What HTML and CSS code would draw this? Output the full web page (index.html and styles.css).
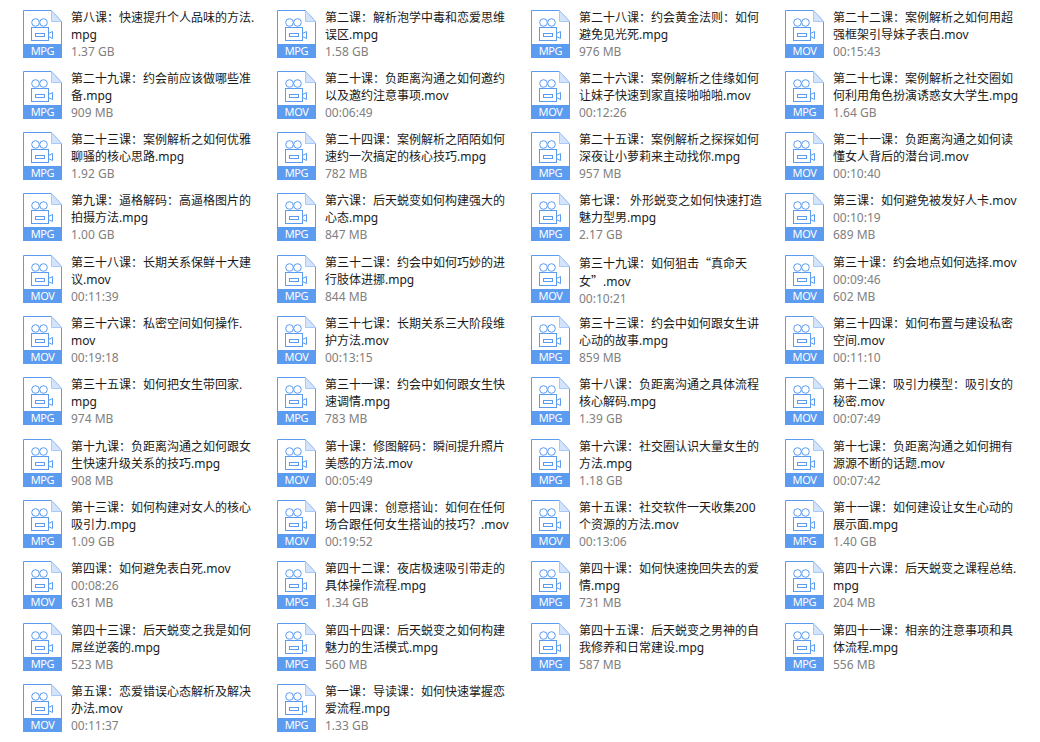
FILE: index.html
```html
<!DOCTYPE html>
<html lang="zh-CN">
<head>
    <meta charset="UTF-8">
    <meta name="viewport" content="width=device-width, initial-scale=1.0">
    <title>课程文件</title>
    <link rel="stylesheet" href="styles.css">
</head>
<body>
    <!-- 图标只画一次，后面都用 use 引用 -->
    <svg class="icon-defs" width="0" height="0">
        <symbol id="file" viewBox="0 0 39 48">
            <path d="M.5.5H28.5L38.5 11.5V47.5H.5Z" fill="#fff" stroke="#5b9bf0"/>
            <path d="M28.5.5V11.5H38.5Z" fill="#d3e4fb" stroke="#a9c9f6"/>
            <rect y="34" width="39" height="14" fill="#5b9bf0"/>
            <g fill="none" stroke="#5b9bf0">
                <circle cx="12.5" cy="12.5" r="3.8"/>
                <circle cx="20.5" cy="12.5" r="3.8"/>
                <rect x="8.5" y="17.5" width="17" height="13"/>
                <rect x="12.5" y="23.5" width="9" height="3"/>
                <path d="M25.5 23.5L29.5 21.5V28.5L25.5 26.5"/>
            </g>
        </symbol>
    </svg>

    <div class="file-grid">
        <div class="file"><div class="icon"><svg><use href="#file"/></svg><span>MPG</span></div><div class="info"><p class="name">第八课：快速提升个人品味的方法.<br>mpg</p><p class="meta">1.37 GB</p></div></div>
        <div class="file"><div class="icon"><svg><use href="#file"/></svg><span>MPG</span></div><div class="info"><p class="name">第二课：解析泡学中毒和恋爱思维<br>误区.mpg</p><p class="meta">1.58 GB</p></div></div>
        <div class="file"><div class="icon"><svg><use href="#file"/></svg><span>MPG</span></div><div class="info"><p class="name">第二十八课：约会黄金法则：如何<br>避免见光死.mpg</p><p class="meta">976 MB</p></div></div>
        <div class="file"><div class="icon"><svg><use href="#file"/></svg><span>MOV</span></div><div class="info"><p class="name">第二十二课：案例解析之如何用超<br>强框架引导妹子表白.mov</p><p class="meta">00:15:43</p></div></div>

        <div class="file"><div class="icon"><svg><use href="#file"/></svg><span>MPG</span></div><div class="info"><p class="name">第二十九课：约会前应该做哪些准<br>备.mpg</p><p class="meta">909 MB</p></div></div>
        <div class="file"><div class="icon"><svg><use href="#file"/></svg><span>MOV</span></div><div class="info"><p class="name">第二十课：负距离沟通之如何邀约<br>以及邀约注意事项.mov</p><p class="meta">00:06:49</p></div></div>
        <div class="file"><div class="icon"><svg><use href="#file"/></svg><span>MOV</span></div><div class="info"><p class="name">第二十六课：案例解析之佳缘如何<br>让妹子快速到家直接啪啪啪.mov</p><p class="meta">00:12:26</p></div></div>
        <div class="file"><div class="icon"><svg><use href="#file"/></svg><span>MPG</span></div><div class="info"><p class="name">第二十七课：案例解析之社交圈如<br>何利用角色扮演诱惑女大学生.mpg</p><p class="meta">1.64 GB</p></div></div>

        <div class="file"><div class="icon"><svg><use href="#file"/></svg><span>MPG</span></div><div class="info"><p class="name">第二十三课：案例解析之如何优雅<br>聊骚的核心思路.mpg</p><p class="meta">1.92 GB</p></div></div>
        <div class="file"><div class="icon"><svg><use href="#file"/></svg><span>MPG</span></div><div class="info"><p class="name">第二十四课：案例解析之陌陌如何<br>速约一次搞定的核心技巧.mpg</p><p class="meta">782 MB</p></div></div>
        <div class="file"><div class="icon"><svg><use href="#file"/></svg><span>MPG</span></div><div class="info"><p class="name">第二十五课：案例解析之探探如何<br>深夜让小萝莉来主动找你.mpg</p><p class="meta">957 MB</p></div></div>
        <div class="file"><div class="icon"><svg><use href="#file"/></svg><span>MOV</span></div><div class="info"><p class="name">第二十一课：负距离沟通之如何读<br>懂女人背后的潜台词.mov</p><p class="meta">00:10:40</p></div></div>

        <div class="file"><div class="icon"><svg><use href="#file"/></svg><span>MPG</span></div><div class="info"><p class="name">第九课：逼格解码：高逼格图片的<br>拍摄方法.mpg</p><p class="meta">1.00 GB</p></div></div>
        <div class="file"><div class="icon"><svg><use href="#file"/></svg><span>MPG</span></div><div class="info"><p class="name">第六课：后天蜕变如何构建强大的<br>心态.mpg</p><p class="meta">847 MB</p></div></div>
        <div class="file"><div class="icon"><svg><use href="#file"/></svg><span>MPG</span></div><div class="info"><p class="name">第七课： 外形蜕变之如何快速打造<br>魅力型男.mpg</p><p class="meta">2.17 GB</p></div></div>
        <div class="file"><div class="icon"><svg><use href="#file"/></svg><span>MOV</span></div><div class="info"><p class="name">第三课：如何避免被发好人卡.mov</p><p class="meta">00:10:19</p><p class="meta">689 MB</p></div></div>

        <div class="file"><div class="icon"><svg><use href="#file"/></svg><span>MOV</span></div><div class="info"><p class="name">第三十八课：长期关系保鲜十大建<br>议.mov</p><p class="meta">00:11:39</p></div></div>
        <div class="file"><div class="icon"><svg><use href="#file"/></svg><span>MPG</span></div><div class="info"><p class="name">第三十二课：约会中如何巧妙的进<br>行肢体进挪.mpg</p><p class="meta">844 MB</p></div></div>
        <div class="file"><div class="icon"><svg><use href="#file"/></svg><span>MOV</span></div><div class="info"><p class="name">第三十九课：如何狙击<span class="quote">“</span>真命天<br>女<span class="quote">”</span>.mov</p><p class="meta">00:10:21</p></div></div>
        <div class="file"><div class="icon"><svg><use href="#file"/></svg><span>MOV</span></div><div class="info"><p class="name">第三十课：约会地点如何选择.mov</p><p class="meta">00:09:46</p><p class="meta">602 MB</p></div></div>

        <div class="file"><div class="icon"><svg><use href="#file"/></svg><span>MOV</span></div><div class="info"><p class="name">第三十六课：私密空间如何操作.<br>mov</p><p class="meta">00:19:18</p></div></div>
        <div class="file"><div class="icon"><svg><use href="#file"/></svg><span>MOV</span></div><div class="info"><p class="name">第三十七课：长期关系三大阶段维<br>护方法.mov</p><p class="meta">00:13:15</p></div></div>
        <div class="file"><div class="icon"><svg><use href="#file"/></svg><span>MPG</span></div><div class="info"><p class="name">第三十三课：约会中如何跟女生讲<br>心动的故事.mpg</p><p class="meta">859 MB</p></div></div>
        <div class="file"><div class="icon"><svg><use href="#file"/></svg><span>MOV</span></div><div class="info"><p class="name">第三十四课：如何布置与建设私密<br>空间.mov</p><p class="meta">00:11:10</p></div></div>

        <div class="file"><div class="icon"><svg><use href="#file"/></svg><span>MPG</span></div><div class="info"><p class="name">第三十五课：如何把女生带回家.<br>mpg</p><p class="meta">974 MB</p></div></div>
        <div class="file"><div class="icon"><svg><use href="#file"/></svg><span>MPG</span></div><div class="info"><p class="name">第三十一课：约会中如何跟女生快<br>速调情.mpg</p><p class="meta">783 MB</p></div></div>
        <div class="file"><div class="icon"><svg><use href="#file"/></svg><span>MPG</span></div><div class="info"><p class="name">第十八课：负距离沟通之具体流程<br>核心解码.mpg</p><p class="meta">1.39 GB</p></div></div>
        <div class="file"><div class="icon"><svg><use href="#file"/></svg><span>MOV</span></div><div class="info"><p class="name">第十二课：吸引力模型：吸引女的<br>秘密.mov</p><p class="meta">00:07:49</p></div></div>

        <div class="file"><div class="icon"><svg><use href="#file"/></svg><span>MPG</span></div><div class="info"><p class="name">第十九课：负距离沟通之如何跟女<br>生快速升级关系的技巧.mpg</p><p class="meta">908 MB</p></div></div>
        <div class="file"><div class="icon"><svg><use href="#file"/></svg><span>MOV</span></div><div class="info"><p class="name">第十课：修图解码：瞬间提升照片<br>美感的方法.mov</p><p class="meta">00:05:49</p></div></div>
        <div class="file"><div class="icon"><svg><use href="#file"/></svg><span>MPG</span></div><div class="info"><p class="name">第十六课：社交圈认识大量女生的<br>方法.mpg</p><p class="meta">1.18 GB</p></div></div>
        <div class="file"><div class="icon"><svg><use href="#file"/></svg><span>MOV</span></div><div class="info"><p class="name">第十七课：负距离沟通之如何拥有<br>源源不断的话题.mov</p><p class="meta">00:07:42</p></div></div>

        <div class="file"><div class="icon"><svg><use href="#file"/></svg><span>MPG</span></div><div class="info"><p class="name">第十三课：如何构建对女人的核心<br>吸引力.mpg</p><p class="meta">1.09 GB</p></div></div>
        <div class="file"><div class="icon"><svg><use href="#file"/></svg><span>MOV</span></div><div class="info"><p class="name">第十四课：创意搭讪：如何在任何<br>场合跟任何女生搭讪的技巧？.mov</p><p class="meta">00:19:52</p></div></div>
        <div class="file"><div class="icon"><svg><use href="#file"/></svg><span>MOV</span></div><div class="info"><p class="name">第十五课：社交软件一天收集200<br>个资源的方法.mov</p><p class="meta">00:13:06</p></div></div>
        <div class="file"><div class="icon"><svg><use href="#file"/></svg><span>MPG</span></div><div class="info"><p class="name">第十一课：如何建设让女生心动的<br>展示面.mpg</p><p class="meta">1.40 GB</p></div></div>

        <div class="file"><div class="icon"><svg><use href="#file"/></svg><span>MOV</span></div><div class="info"><p class="name">第四课：如何避免表白死.mov</p><p class="meta">00:08:26</p><p class="meta">631 MB</p></div></div>
        <div class="file"><div class="icon"><svg><use href="#file"/></svg><span>MPG</span></div><div class="info"><p class="name">第四十二课：夜店极速吸引带走的<br>具体操作流程.mpg</p><p class="meta">1.34 GB</p></div></div>
        <div class="file"><div class="icon"><svg><use href="#file"/></svg><span>MPG</span></div><div class="info"><p class="name">第四十课：如何快速挽回失去的爱<br>情.mpg</p><p class="meta">731 MB</p></div></div>
        <div class="file"><div class="icon"><svg><use href="#file"/></svg><span>MPG</span></div><div class="info"><p class="name">第四十六课：后天蜕变之课程总结.<br>mpg</p><p class="meta">204 MB</p></div></div>

        <div class="file"><div class="icon"><svg><use href="#file"/></svg><span>MPG</span></div><div class="info"><p class="name">第四十三课：后天蜕变之我是如何<br>屌丝逆袭的.mpg</p><p class="meta">523 MB</p></div></div>
        <div class="file"><div class="icon"><svg><use href="#file"/></svg><span>MPG</span></div><div class="info"><p class="name">第四十四课：后天蜕变之如何构建<br>魅力的生活模式.mpg</p><p class="meta">560 MB</p></div></div>
        <div class="file"><div class="icon"><svg><use href="#file"/></svg><span>MPG</span></div><div class="info"><p class="name">第四十五课：后天蜕变之男神的自<br>我修养和日常建设.mpg</p><p class="meta">587 MB</p></div></div>
        <div class="file"><div class="icon"><svg><use href="#file"/></svg><span>MPG</span></div><div class="info"><p class="name">第四十一课：相亲的注意事项和具<br>体流程.mpg</p><p class="meta">556 MB</p></div></div>

        <div class="file"><div class="icon"><svg><use href="#file"/></svg><span>MOV</span></div><div class="info"><p class="name">第五课：恋爱错误心态解析及解决<br>办法.mov</p><p class="meta">00:11:37</p></div></div>
        <div class="file"><div class="icon"><svg><use href="#file"/></svg><span>MPG</span></div><div class="info"><p class="name">第一课：导读课：如何快速掌握恋<br>爱流程.mpg</p><p class="meta">1.33 GB</p></div></div>
    </div>
</body>
</html>
```
FILE: styles.css
```css
* {
    margin: 0;
    padding: 0;
    box-sizing: border-box;
}

body {
    font-family: "Noto Sans", "Noto Sans CJK TC", sans-serif;
    font-size: 12px;
    background-color: #fff;
    color: #1a1a1a;
    overflow: hidden;
}

.icon-defs {
    display: block;
}

.file-grid {
    display: grid;
    grid-template-columns: repeat(4, 254px);
    grid-auto-rows: 61.3px;
    padding: 9.55px 0 0 23px;
}

.file {
    display: flex;
    gap: 9px;
}

.icon {
    position: relative;
    flex: none;
    width: 39px;
    height: 48px;
}

.icon svg {
    display: block;
    width: 39px;
    height: 48px;
}

.icon span {
    position: absolute;
    left: 0;
    right: 0;
    bottom: 0;
    height: 14px;
    line-height: 14px;
    text-align: center;
    color: #fff;
    font-size: 11px;
    letter-spacing: -0.4px;
}

.info {
    margin-top: -1px;
    line-height: 17px;
    white-space: nowrap;
}

.meta {
    color: #808080;
}

/* 引号要占满一个汉字宽 */
.quote {
    font-family: "Noto Sans CJK SC", sans-serif;
}
```
